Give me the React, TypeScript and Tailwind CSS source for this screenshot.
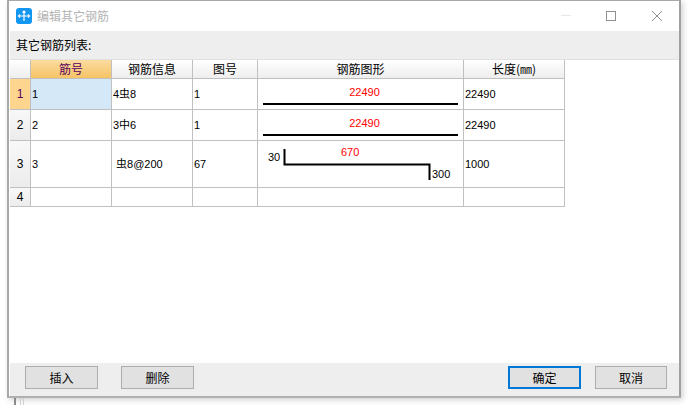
const cjk = "font-['Noto_Sans_CJK_SC','Liberation_Sans',sans-serif]";

const rows = [
  { no: "1", name: "1", bar: "4虫8", fig: "1", len: "22490", h: "h-[31px]", num: "bg-[#fdd58f] text-[#5a0060]", sel: true },
  { no: "2", name: "2", bar: "3中6", fig: "1", len: "22490", h: "h-[31px]", num: "bg-gradient-to-b from-[#f8f8f8] to-[#ececec]", sel: false },
  { no: "3", name: "3", bar: " 虫8@200", fig: "67", len: "1000", h: "h-[47px]", num: "bg-gradient-to-b from-[#f8f8f8] to-[#ececec]", sel: false },
  { no: "4", name: "", bar: "", fig: "", len: "", h: "h-[19px]", num: "bg-gradient-to-b from-[#f8f8f8] to-[#ececec]", sel: false },
];

function Straight() {
  return (
    <div className="flex h-full flex-col items-center justify-end px-[5px] pb-[4px]">
      <span className="mb-[4px] pl-[8px] font-['Liberation_Sans',sans-serif] text-[11px] leading-[14px] text-[#ff0000]">22490</span>
      <div className="h-[2px] w-full bg-black" />
    </div>
  );
}

function Bent() {
  return (
    <svg width="205" height="46" viewBox="0 0 205 46" className="block">
      <path d="M26.5 8 V23.5 H171.5 V39" fill="none" stroke="#000" strokeWidth="2" />
      <text x="10" y="20" fontSize="11" fontFamily="Liberation Sans">30</text>
      <text x="83" y="15" fontSize="11" fill="#ff0000" fontFamily="Liberation Sans">670</text>
      <text x="174" y="37" fontSize="11" fontFamily="Liberation Sans">300</text>
    </svg>
  );
}

function HeaderCell({ label, width, active }: { label: string; width: string; active?: boolean }) {
  return (
    <div
      className={`flex h-[19px] shrink-0 items-center justify-center border-r border-b border-[#c0c0c0] text-[12px] leading-none ${width} ${
        active
          ? "bg-gradient-to-b from-[#fbdc9f] to-[#f6c365] text-[#5a0060]"
          : "bg-gradient-to-b from-white to-[#eeeeee] text-black"
      }`}
    >
      {label}
    </div>
  );
}

function Cell({ width, children, sel }: { width: string; children?: React.ReactNode; sel?: boolean }) {
  return (
    <div
      className={`flex h-full shrink-0 items-center whitespace-pre border-r border-b border-[#c0c0c0] pl-[1px] font-['Liberation_Sans','Noto_Sans_CJK_SC',sans-serif] text-[11px] ${width} ${
        sel ? "bg-[#d5e8f8]" : "bg-white"
      }`}
    >
      {children}
    </div>
  );
}

export default function App() {
  return (
    <div className={`h-[405px] w-[688px] overflow-hidden bg-white pl-[7px] pr-[7px] ${cjk}`}>
      <div className="flex h-[398px] flex-col border-t border-r-2 border-b-2 border-l-2 border-t-[#a8a8a8] border-r-[#a0a0a0] border-b-[#b0b0b0] border-l-[#a8a8a8] bg-white pl-px shadow-[2px_2px_6px_rgba(0,0,0,0.18)]">
        <div className="flex h-[30px] shrink-0 items-center bg-white pb-[1px] pl-[6px]">
          <div className="flex h-[16px] w-[16px] items-center justify-center rounded-[3px] bg-[#1296f0]">
            <svg width="14" height="14" viewBox="0 0 14 14" fill="none" stroke="#fff" strokeWidth="1.2">
              <path d="M7 2 V12 M3 7 H11 M5.5 3.5 L7 2 L8.5 3.5 M3 5.5 L1.5 7 L3 8.5 M11 5.5 L12.5 7 L11 8.5" />
            </svg>
          </div>
          <span className="ml-[5px] text-[12px] text-[#b4b4b4]">编辑其它钢筋</span>
          <div className="ml-auto mr-[-1px] flex items-center">
            <div className="h-px w-[10px] bg-[#e8e8e8]" />
            <div className="ml-[35px] h-[10px] w-[10px] border border-[#8f8f8f]" />
            <svg width="10" height="10" viewBox="0 0 10 10" className="ml-[36px] mr-[18px]" stroke="#8f8f8f" strokeWidth="1">
              <path d="M0 0 L10 10 M10 0 L0 10" />
            </svg>
          </div>
        </div>

        <div className="flex h-[28px] shrink-0 items-center bg-[#eeeeee] pl-[6px] text-[12px] text-black">其它钢筋列表:</div>

        <div className="min-h-0 flex-1 bg-white">
          <div className="flex border-t border-[#e0e0e0]">
            <HeaderCell label="" width="w-[21px]" />
            <HeaderCell label="筋号" width="w-[81px]" active />
            <HeaderCell label="钢筋信息" width="w-[81px]" />
            <HeaderCell label="图号" width="w-[65px]" />
            <HeaderCell label="钢筋图形" width="w-[206px]" />
            <HeaderCell label="长度(㎜)" width="w-[101px]" />
          </div>
          {rows.map((r) => (
            <div key={r.no} className={`flex ${r.h}`}>
              <div className={`flex h-full w-[21px] shrink-0 items-center justify-center border-r border-b border-[#c0c0c0] font-['Liberation_Sans',sans-serif] text-[12px] ${r.num}`}>
                {r.no}
              </div>
              <Cell width="w-[81px]" sel={r.sel}>{r.name}</Cell>
              <Cell width="w-[81px]">{r.bar}</Cell>
              <Cell width="w-[65px]">{r.fig}</Cell>
              <div className="h-full w-[206px] shrink-0 border-r border-b border-[#c0c0c0]">
                {r.no === "1" || r.no === "2" ? <Straight /> : r.no === "3" ? <Bent /> : null}
              </div>
              <Cell width="w-[101px]">{r.len}</Cell>
            </div>
          ))}
        </div>

        <div className="flex h-[33px] shrink-0 items-start bg-[#eeeeee] pl-[15px] pr-[12px] pt-[3px] text-[12px]">
          <button className="h-[23px] w-[73px] border border-[#adadad] bg-[#e1e1e1]">插入</button>
          <button className="ml-[23px] h-[23px] w-[73px] border border-[#adadad] bg-[#e1e1e1]">删除</button>
          <button className="ml-auto h-[23px] w-[73px] border-2 border-[#0078d7] bg-[#e1e1e1]">确定</button>
          <button className="ml-[14px] h-[23px] w-[72px] border border-[#adadad] bg-[#e1e1e1]">取消</button>
        </div>
      </div>
      <div className="flex h-[7px] pl-[7px]">
        <div className="h-full w-[2px] bg-[#8a8a8a]" />
        <div className="ml-[4px] h-full w-px bg-[#d0d0d0]" />
        <div className="ml-[2px] h-full w-px bg-[#d0d0d0]" />
      </div>
    </div>
  );
}
